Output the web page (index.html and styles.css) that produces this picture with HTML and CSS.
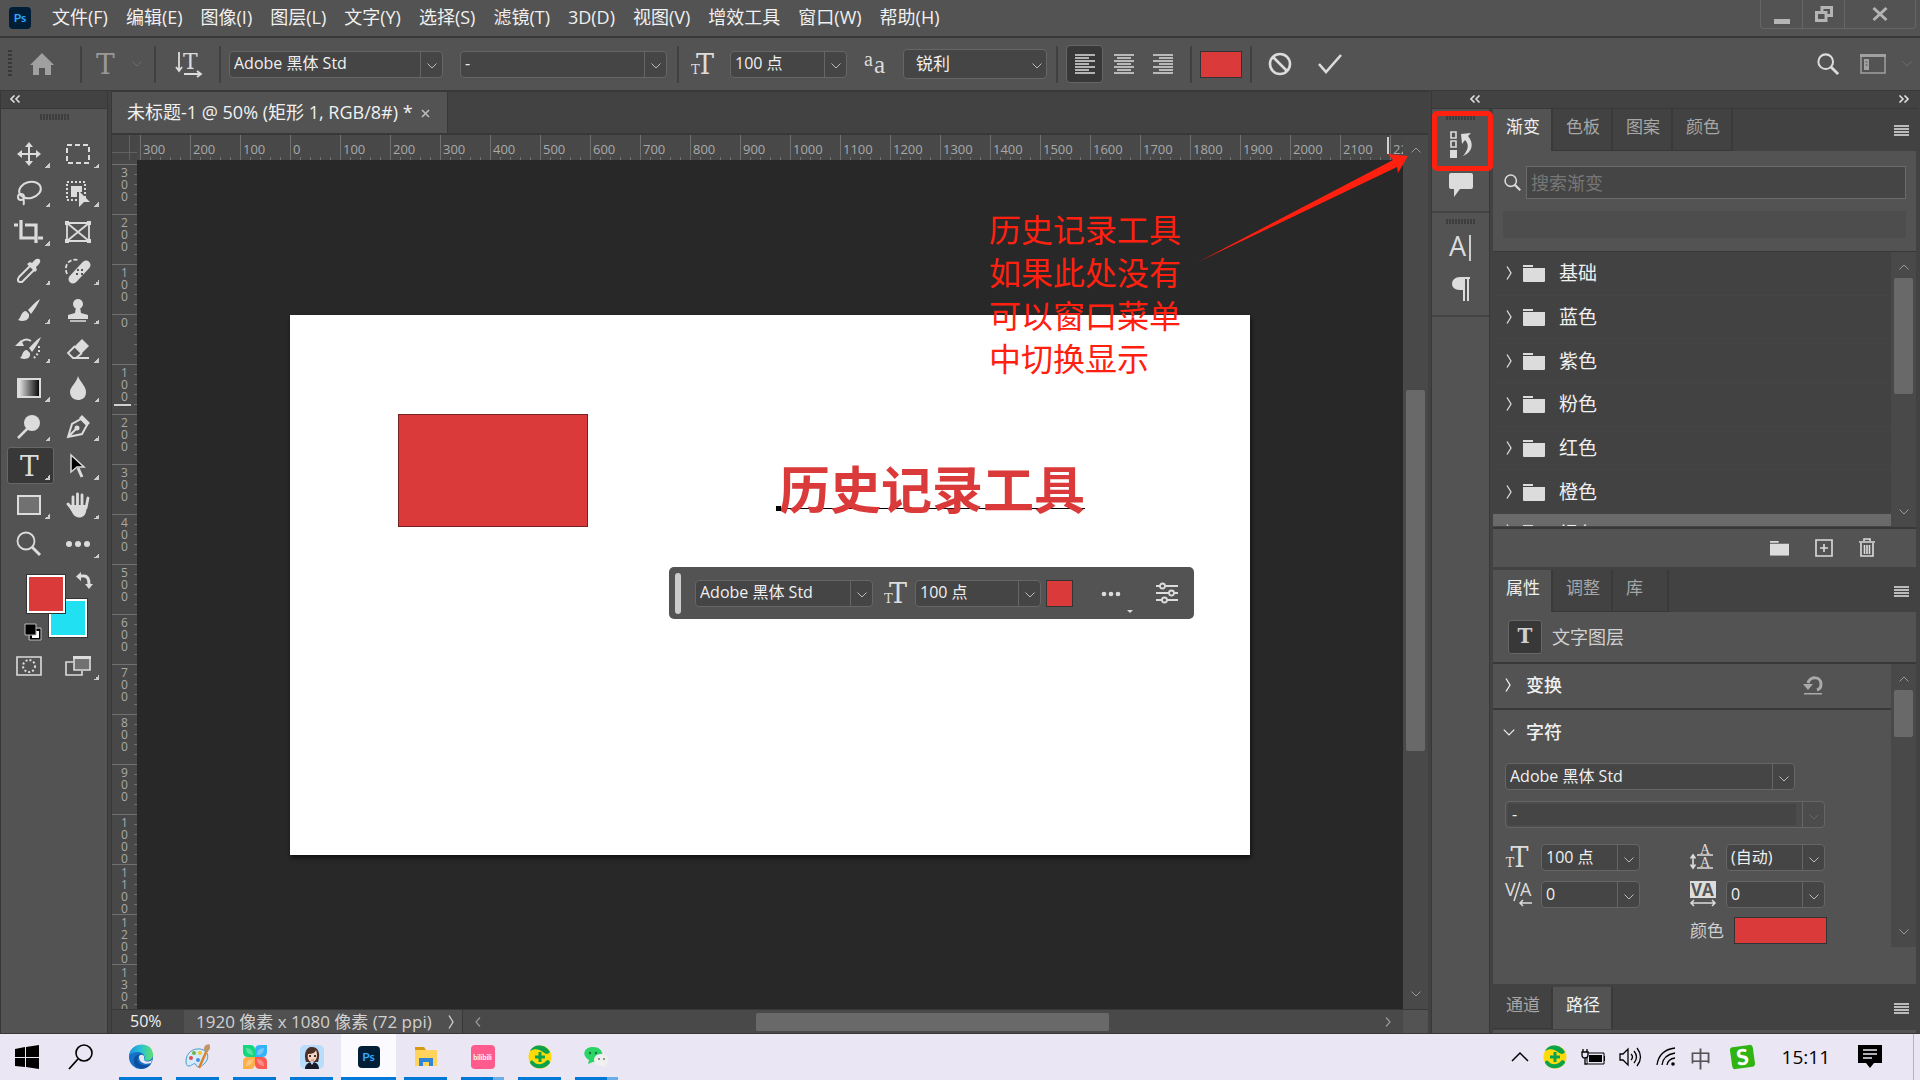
FILE: index.html
```html
<!doctype html>
<html lang="zh-CN">
<head>
    <meta charset="UTF-8">
    <meta name="viewport" content="width=device-width, initial-scale=1.0">
    <title>未标题-1 @ 50% (矩形 1, RGB/8#) *</title>
    <link rel="stylesheet" href="styles.css">
</head>
<body>
<svg class="sprite" aria-hidden="true">
    <symbol id="down" viewBox="0 0 10 6"><path d="M0.5 0.5 5 5 9.5 0.5" fill="none" stroke="currentColor"/></symbol>
    <symbol id="up" viewBox="0 0 10 6"><path d="M0.5 5.5 5 1 9.5 5.5" fill="none" stroke="currentColor"/></symbol>
    <symbol id="right" viewBox="0 0 6 14"><path d="M1 0.5 5 7 1 13.5" fill="none" stroke="currentColor" stroke-width="1.3"/></symbol>
    <symbol id="left" viewBox="0 0 6 10"><path d="M5 0.5 1 5 5 9.5" fill="none" stroke="currentColor" stroke-width="1.2"/></symbol>
    <symbol id="collapse" viewBox="0 0 11 8"><path d="M4.500.5 1 4 4.500 7.500M9.500.5 6 4 9.500 7.500" fill="none" stroke="currentColor" stroke-width="1.600"/></symbol>
    <symbol id="expand" viewBox="0 0 11 8"><path d="M1.500.5 5 4 1.500 7.500M6.500.5 10 4 6.500 7.500" fill="none" stroke="currentColor" stroke-width="1.600"/></symbol>
    <symbol id="menu" viewBox="0 0 15 11"><path d="M0 1h15M0 4h15M0 7h15M0 10h15" stroke="currentColor" stroke-width="2"/></symbol>
    <symbol id="folder" viewBox="0 0 22 18"><path d="M0 1h10v2H0zM0 4h22v13a1 1 0 0 1-1 1H1a1 1 0 0 1-1-1z" fill="currentColor"/></symbol>
    <symbol id="search" viewBox="0 0 24 24"><circle cx="9.500" cy="9.500" r="8" fill="none" stroke="currentColor" stroke-width="2.200"/><path d="m15 15 8 8" stroke="currentColor" stroke-width="3"/></symbol>
    <symbol id="size" viewBox="0 0 25 22"><text x="5" y="21" class="slab" font-size="27">T</text><text x="0" y="21" class="slab" font-size="13">T</text></symbol>
    <symbol id="safe" viewBox="0 0 24 24">
        <circle cx="12" cy="12" r="11.500" fill="#ffda0b"/>
        <path d="M2 6C5-1 17-2 22 7c-2 3-5 2-7 0-4-3-8-4-13-1zM2 18c4 7 15 7 20 0 0-2-1-3-3-3-5 6-11 5-14 1-2-1-3 0-3 2z" fill="#0ba24c"/>
        <path d="M12 7v10M7 12h10" stroke="#0ba24c" stroke-width="3"/>
    </symbol>
</svg>

<div class="app">
    <header class="menubar">
        <span class="ps-logo">Ps</span>
        <nav class="menus">
            <button>文件(F)</button>
            <button>编辑(E)</button>
            <button>图像(I)</button>
            <button>图层(L)</button>
            <button>文字(Y)</button>
            <button>选择(S)</button>
            <button>滤镜(T)</button>
            <button>3D(D)</button>
            <button>视图(V)</button>
            <button>增效工具</button>
            <button>窗口(W)</button>
            <button>帮助(H)</button>
        </nav>
        <div class="window-buttons">
            <button aria-label="最小化"><svg width="16" height="20"><path d="M0 15h16v5H0z" fill="currentColor"/></svg></button>
            <button aria-label="还原"><svg width="18" height="16"><path d="M7 7V1.500h9.500v8H11M1.500 6.500H11v8H1.500z" fill="none" stroke="currentColor" stroke-width="3"/></svg></button>
            <button class="close" aria-label="关闭"><svg width="16" height="14"><path d="m1.500 1 13 12M14.500 1 1.500 13" stroke="currentColor" stroke-width="3"/></svg></button>
        </div>
    </header>

    <section class="options">
        <span class="grip-v"></span>
        <button class="home" aria-label="主页"><svg width="26" height="24"><path d="M13 1 1 13h3v10h6v-7h6v7h6V13h3z" fill="currentColor"/></svg></button>
        <span class="sep"></span>
        <button class="preset" aria-label="工具预设">
            <svg width="22" height="24"><text x="1" y="22" class="slab" font-size="28">T</text></svg>
            <svg class="faint" width="10" height="6"><use href="#down"/></svg>
        </button>
        <span class="sep"></span>
        <button class="orient" aria-label="切换文本取向">
            <svg width="28" height="26"><path d="M4 1v18M1 16l3 4 3-4M9 23h16M22 20l4 3-4 3" fill="none" stroke="currentColor" stroke-width="1.800"/><text x="8" y="18" class="slab" font-size="22">T</text></svg>
        </button>
        <span class="sep"></span>
        <div class="combo family"><input value="Adobe 黑体 Std" aria-label="字体"><button aria-label="展开"><svg width="10" height="6"><use href="#down"/></svg></button></div>
        <div class="combo weight"><input value="-" aria-label="字体样式"><button aria-label="展开"><svg width="10" height="6"><use href="#down"/></svg></button></div>
        <span class="sep"></span>
        <svg class="size-icon" width="25" height="22"><use href="#size"/></svg>
        <div class="combo points"><input value="100 点" aria-label="字号"><button aria-label="展开"><svg width="10" height="6"><use href="#down"/></svg></button></div>
        <svg class="aa-icon" width="22" height="22"><text x="0" y="13" class="serif" font-size="20">a</text><text x="10" y="20" class="serif" font-size="25">a</text></svg>
        <div class="select"><select aria-label="消除锯齿"><option>锐利</option></select><svg width="10" height="6"><use href="#down"/></svg></div>
        <span class="sep"></span>
        <div class="aligns">
            <button class="on" aria-label="左对齐"><svg width="20" height="22"><path d="M0 2h20M0 5h14M0 8h20M0 11h14M0 14h20M0 17h14M0 20h20" stroke="currentColor" stroke-width="1.500"/></svg></button>
            <button aria-label="居中对齐"><svg width="20" height="22"><path d="M0 2h20M3 5h14M0 8h20M3 11h14M0 14h20M3 17h14M0 20h20" stroke="currentColor" stroke-width="1.500"/></svg></button>
            <button aria-label="右对齐"><svg width="20" height="22"><path d="M0 2h20M6 5h14M0 8h20M6 11h14M0 14h20M6 17h14M0 20h20" stroke="currentColor" stroke-width="1.500"/></svg></button>
        </div>
        <span class="sep"></span>
        <button class="swatch" aria-label="文本颜色"></button>
        <span class="sep"></span>
        <button class="cancel" aria-label="取消"><svg width="24" height="24"><circle cx="12" cy="12" r="10" fill="none" stroke="currentColor" stroke-width="2.600"/><path d="m5 5 14 14" stroke="currentColor" stroke-width="2.600"/></svg></button>
        <button class="commit" aria-label="提交"><svg width="24" height="20"><path d="m1 10 7 8L23 1" fill="none" stroke="currentColor" stroke-width="2.600"/></svg></button>
        <div class="options-end">
            <button aria-label="搜索"><svg width="22" height="22"><use href="#search"/></svg></button>
            <button class="dim" aria-label="工作区"><svg width="26" height="20"><path d="M1 1h24v18H1z" fill="none" stroke="currentColor" stroke-width="1.500"/><path d="M0 0h26v3H0zM4 5h5v11H4z" fill="currentColor"/><path d="M5.500 8h2M5.500 11h2" stroke="#535353"/></svg></button>
            <svg class="faint" width="10" height="6"><use href="#down"/></svg>
        </div>
    </section>

    <main class="workspace">
        <aside class="toolbox">
            <div class="dock-head"><svg width="11" height="8"><use href="#collapse"/></svg></div>
            <div class="tools-body">
                <span class="grip"></span>
                <div class="tools">
                    <button aria-label="移动"><svg width="24" height="24"><path d="M12 3v18M3 12h18" stroke="currentColor" stroke-width="2"/><path d="m12 0 4 5H8zM12 24l4-5H8zM0 12l5-4v8zM24 12l-5-4v8z" fill="currentColor"/></svg></button>
                    <button aria-label="矩形选框"><svg width="26" height="22"><path d="M2 2h22v18H2z" fill="none" stroke="currentColor" stroke-width="2" stroke-dasharray="5 3"/></svg></button>
                    <button aria-label="套索"><svg width="28" height="26"><g fill="none" stroke="currentColor" stroke-width="2"><ellipse cx="15" cy="10" rx="11" ry="8" transform="rotate(-15 15 10)"/><circle cx="6" cy="17" r="3"/><path d="M8 19c2 2 0 4 1 6"/></g></svg></button>
                    <button aria-label="对象选择"><svg width="28" height="28"><path d="M3 3h18v18H3z" fill="none" stroke="currentColor" stroke-width="2" stroke-dasharray="2 2"/><path d="M7 7h11v6h-5v5H7zM15 12l11 11h-6l-5 5z" fill="currentColor"/></svg></button>
                    <button aria-label="裁剪"><svg width="30" height="28"><path d="M7 2v18h14M11 7h11v18M0 7h4M24 20h5" fill="none" stroke="currentColor" stroke-width="3.200"/></svg></button>
                    <button class="plain" aria-label="图框"><svg width="26" height="22"><path d="M2 2h22v18H2zM2 2l22 18M24 2 2 20" fill="none" stroke="currentColor" stroke-width="1.800"/><path d="M0 0h4v4H0zM22 0h4v4h-4zM0 18h4v4H0zM22 18h4v4h-4z" fill="currentColor"/></svg></button>
                    <button aria-label="吸管"><svg width="26" height="26"><path d="M14 8 3 19c-2 3-1 5 1 5h2L18 12" fill="none" stroke="currentColor" stroke-width="2"/><path d="m11 6 3-2 2 1c3-4 5-5 7-4s2 4-3 8l1 3-2 2z" fill="currentColor"/></svg></button>
                    <button aria-label="修复画笔"><svg width="28" height="28"><path d="M3 17C-1 8 6 1 14 3" fill="none" stroke="currentColor" stroke-width="1.800" stroke-dasharray="4 2"/><path d="M9 22 22 8" stroke="currentColor" stroke-width="9" stroke-linecap="round"/><path d="M13 13h2M17 13h2M12 17h2M17 17h2" stroke="#535353" stroke-width="2"/></svg></button>
                    <button aria-label="画笔"><svg width="24" height="24"><path d="M23 1c-5 3-9 8-12 11l3 4c3-4 7-10 9-15zM9 13c-5 0-5 7-8 9 5 2 12 1 11-6z" fill="currentColor"/></svg></button>
                    <button aria-label="仿制图章"><svg width="22" height="24"><circle cx="11" cy="6" r="5" fill="currentColor"/><path d="M9 9h4l1 6 7 2v4H1v-4l7-2z" fill="currentColor"/><path d="M3 23h16" stroke="currentColor" stroke-width="1.500"/></svg></button>
                    <button aria-label="历史记录画笔"><svg width="28" height="26"><path d="M26 1c-5 3-9 8-12 11l3 4c3-4 7-10 9-15zM12 14c-5 0-4 6-7 8 5 2 11 1 10-5zM0 10l6-6 3 6z" fill="currentColor"/><path d="M6 6c3-3 7-3 10-1" fill="none" stroke="currentColor" stroke-width="2"/><path d="M24 10v6l-5 6" fill="none" stroke="currentColor" stroke-width="2" stroke-dasharray="2 2"/></svg></button>
                    <button aria-label="橡皮擦"><svg width="24" height="22"><path d="m8 9 8-8 7 7-8 8z" fill="currentColor"/><path d="m9 8-7 7 5 5h3l6-5M7 20h16" fill="none" stroke="currentColor" stroke-width="1.800"/></svg></button>
                    <button aria-label="渐变"><svg width="24" height="20"><defs><linearGradient id="bw"><stop stop-color="#eee"/><stop offset="1" stop-color="#000"/></linearGradient></defs><path d="M1 1h22v18H1z" fill="url(#bw)" stroke="currentColor" stroke-width="2"/></svg></button>
                    <button aria-label="模糊"><svg width="16" height="24"><path d="M8 0c2 6 8 10 8 16s-4 8-8 8-8-3-8-8S7 6 8 0z" fill="currentColor"/></svg></button>
                    <button aria-label="减淡"><svg width="24" height="24"><circle cx="15" cy="8" r="8" fill="currentColor"/><path d="M11 13 1 23" stroke="currentColor" stroke-width="2.500"/></svg></button>
                    <button aria-label="钢笔"><svg width="24" height="24"><path d="M2 22 6 9l9-5 6 6-5 9zM2 22l9-9" fill="none" stroke="currentColor" stroke-width="2"/><circle cx="11" cy="13" r="2.500" fill="currentColor"/><path d="m13 3 3-3 8 8-3 3z" fill="currentColor"/></svg></button>
                    <button class="on" aria-label="横排文字"><svg width="22" height="24"><text x="2" y="22" class="slab" font-size="28">T</text></svg></button>
                    <button aria-label="路径选择"><svg width="18" height="26"><path d="m2 2 13 12H8l-6 5z" fill="#000" stroke="currentColor" stroke-width="1.500"/><path d="m9 15 4 9" stroke="currentColor" stroke-width="3"/></svg></button>
                    <button aria-label="矩形"><svg width="24" height="20"><path d="M1 1h22v18H1z" fill="#717171" stroke="currentColor" stroke-width="2"/></svg></button>
                    <button aria-label="抓手"><svg width="26" height="26"><path d="M8 15V5M12.500 14V2M17 14V3M21 16l2-10M8 18 3 12" stroke="currentColor" stroke-width="2.800" stroke-linecap="round"/><path d="M7 13h15l-1 7c-2 7-10 7-13 2l-5-9z" fill="currentColor"/></svg></button>
                    <button class="plain" aria-label="缩放"><svg width="26" height="26"><circle cx="10" cy="10" r="8.500" fill="none" stroke="currentColor" stroke-width="1.800"/><path d="m16 16 8 8" stroke="currentColor" stroke-width="3"/></svg></button>
                    <button aria-label="编辑工具栏"><svg width="26" height="8"><circle cx="4" cy="4" r="3"/><circle cx="13" cy="4" r="3"/><circle cx="22" cy="4" r="3"/></svg></button>
                </div>
                <div class="colors">
                    <button class="background" aria-label="背景色"></button>
                    <button class="foreground" aria-label="前景色"></button>
                    <button class="swap" aria-label="切换颜色"><svg width="17" height="17"><path d="M4 4h4c4 0 5 3 5 8" fill="none" stroke="currentColor" stroke-width="3"/><path d="M0 4.500 5 0v9zM13 17l-4-5h8z" fill="currentColor"/></svg></button>
                    <button class="default" aria-label="默认颜色"><svg width="18" height="18"><path d="M7 7h9v9H7z" fill="#fff" stroke="#000" stroke-width="2"/><path d="M1 1h11v11H1z" fill="#000" stroke="#bbb"/><path d="M12 5h5v12H5v-5" fill="none" stroke="#bbb"/></svg></button>
                </div>
                <div class="tools">
                    <button class="plain" aria-label="快速蒙版"><svg width="26" height="20"><path d="M1 1h24v18H1z" fill="none" stroke="currentColor" stroke-width="1.600"/><circle cx="13" cy="10" r="6" fill="none" stroke="currentColor" stroke-width="2" stroke-dasharray="2 2"/></svg></button>
                    <button aria-label="屏幕模式"><svg width="26" height="20"><path d="M8 6H1v13h16v-4" fill="none" stroke="currentColor" stroke-width="1.600"/><path d="M9 2h16v12H9z" fill="#717171" stroke="currentColor" stroke-width="1.600"/><path d="M8 0h18v3H8z" fill="currentColor"/></svg></button>
                </div>
            </div>
        </aside>

        <section class="document">
            <div class="doc-tabs">
                <div class="doc-tab"><span>未标题-1 @ 50% (矩形 1, RGB/8#) *</span><button aria-label="关闭文档"><svg width="9" height="9"><path d="m1 1 7 7M8 1 1 8" stroke="currentColor" stroke-width="1.600"/></svg></button></div>
            </div>
            <div class="corner"></div>
            <div class="ruler ruler-h"><i class="mark"></i></div>
            <div class="ruler ruler-v"><i class="mark"></i></div>
            <div class="canvas">
                <div class="artboard">
                    <div class="shape"></div>
                    <div class="headline">历史记录工具</div>
                    <div class="context-bar">
                        <span class="handle"></span>
                        <div class="combo"><input value="Adobe 黑体 Std" aria-label="字体"><button aria-label="展开"><svg width="10" height="6"><use href="#down"/></svg></button></div>
                        <svg class="size-icon" width="25" height="22"><use href="#size"/></svg>
                        <div class="combo points"><input value="100 点" aria-label="字号"><button aria-label="展开"><svg width="10" height="6"><use href="#down"/></svg></button></div>
                        <button class="swatch" aria-label="文本颜色"></button>
                        <button class="more" aria-label="更多"><svg width="34" height="28"><circle cx="3" cy="15" r="2.300"/><circle cx="10" cy="15" r="2.300"/><circle cx="17" cy="15" r="2.300"/><path d="M26 31h6l-3 3z"/></svg></button>
                        <button class="sliders" aria-label="属性"><svg width="22" height="22"><g fill="none" stroke="currentColor" stroke-width="1.800"><path d="M0 4h4M9 4h13M0 11h13M18 11h4M0 18h6M11 18h11"/><circle cx="6.500" cy="4" r="2.500"/><circle cx="15.500" cy="11" r="2.500"/><circle cx="8.500" cy="18" r="2.500"/></g></svg></button>
                    </div>
                </div>
            </div>
            <div class="scroll scroll-y"><svg width="10" height="6"><use href="#up"/></svg><i></i><svg width="10" height="6"><use href="#down"/></svg></div>
            <footer class="status">
                <input class="zoom" value="50%" aria-label="缩放比例">
                <button class="info">1920 像素 x 1080 像素 (72 ppi)<svg width="6" height="14"><use href="#right"/></svg></button>
                <div class="scroll scroll-x"><svg width="6" height="10"><use href="#left"/></svg><i></i><svg class="flip" width="6" height="10"><use href="#left"/></svg></div>
            </footer>
            <div class="note">历史记录工具<br>如果此处没有<br>可以窗口菜单<br>中切换显示</div>
            <svg class="arrow" width="210" height="108"><path d="M0 107 195 5 190-1 210 1 200 18 199 12z" fill="#ff2010"/></svg>
        </section>

        <aside class="dock">
            <div class="dock-head"><svg class="first" width="11" height="8"><use href="#collapse"/></svg><svg width="11" height="8"><use href="#expand"/></svg></div>
            <div class="strip">
                <div class="strip-group">
                    <span class="grip"></span>
                    <button class="history" aria-label="历史记录"><svg width="24" height="28"><path d="M2 2h5v6H2zM2 11h5v6H2z" fill="none" stroke="currentColor" stroke-width="1.600"/><path d="M1 20h7v8H1zM12 4l10-1-3 3c6 7 5 16-5 20 6-7 6-12 2-16l-3 4z" fill="currentColor"/></svg></button>
                    <button aria-label="注释"><svg width="24" height="24"><path d="M2 0h20q2 0 2 2v12q0 2-2 2H11l-6 8v-8H2q-2 0-2-2V2q0-2 2-2z" fill="currentColor"/></svg></button>
                </div>
                <div class="strip-group">
                    <span class="grip"></span>
                    <button aria-label="字符"><svg width="24" height="28"><text x="0" y="22" class="sans" font-size="27">A</text><path d="M21 1v26" stroke="currentColor" stroke-width="1.800"/></svg></button>
                    <button aria-label="段落"><svg width="18" height="24"><path d="M10 0h8v2h-1v22h-2V2h-2v22h-2V13H8C-3 13-2 0 8 0z" fill="currentColor"/></svg></button>
                </div>
                <div class="strip-group rest"></div>
            </div>
            <div class="panels">
                <section class="panel gradients">
                    <div class="tabs">
                        <button class="on">渐变</button><button>色板</button><button>图案</button><button>颜色</button>
                        <svg width="15" height="11"><use href="#menu"/></svg>
                    </div>
                    <label class="find"><svg width="17" height="17"><use href="#search"/></svg><input placeholder="搜索渐变"></label>
                    <div class="recent"></div>
                    <div class="list">
                        <ul>
                            <li><svg width="6" height="14"><use href="#right"/></svg><svg width="22" height="18"><use href="#folder"/></svg>基础</li>
                            <li><svg width="6" height="14"><use href="#right"/></svg><svg width="22" height="18"><use href="#folder"/></svg>蓝色</li>
                            <li><svg width="6" height="14"><use href="#right"/></svg><svg width="22" height="18"><use href="#folder"/></svg>紫色</li>
                            <li><svg width="6" height="14"><use href="#right"/></svg><svg width="22" height="18"><use href="#folder"/></svg>粉色</li>
                            <li><svg width="6" height="14"><use href="#right"/></svg><svg width="22" height="18"><use href="#folder"/></svg>红色</li>
                            <li><svg width="6" height="14"><use href="#right"/></svg><svg width="22" height="18"><use href="#folder"/></svg>橙色</li>
                            <li class="selected"><svg width="6" height="14"><use href="#right"/></svg><svg width="22" height="18"><use href="#folder"/></svg>绿色</li>
                        </ul>
                        <div class="scroll scroll-y"><svg width="10" height="6"><use href="#up"/></svg><i></i><svg width="10" height="6"><use href="#down"/></svg></div>
                    </div>
                    <div class="panel-foot">
                        <button aria-label="新建组"><svg width="19" height="16" viewBox="0 0 22 18"><use href="#folder"/></svg></button>
                        <button aria-label="新建渐变"><svg width="18" height="18"><path d="M1 1h16v16H1zM9 5v8M5 9h8" fill="none" stroke="currentColor" stroke-width="1.600"/></svg></button>
                        <button aria-label="删除"><svg width="16" height="20"><path d="M0 4h16M5 3V1h6v2M2 5v13h12V5M5.500 7v9M8 7v9M10.500 7v9" fill="none" stroke="currentColor" stroke-width="1.600"/></svg></button>
                    </div>
                </section>

                <section class="panel props">
                    <div class="tabs">
                        <button class="on">属性</button><button>调整</button><button>库</button>
                        <svg width="15" height="11"><use href="#menu"/></svg>
                    </div>
                    <div class="layer-kind"><span class="kind-icon">T</span>文字图层</div>
                    <div class="props-scroll">
                        <div class="props-body">
                            <h3 class="transform"><svg width="6" height="14"><use href="#right"/></svg>变换
                                <button aria-label="重置"><svg width="20" height="20"><path d="M5 8c2-7 13-7 13 1 0 3-1 5-4 6" fill="none" stroke="currentColor" stroke-width="3"/><path d="M0 9h10l-5 6zM1 18h18v1.500H1z" fill="currentColor"/></svg></button></h3>
                            <h3><svg width="12" height="7"><use href="#down"/></svg>字符</h3>
                            <div class="fields">
                                <div class="combo family"><input value="Adobe 黑体 Std" aria-label="字体"><button aria-label="展开"><svg width="10" height="6"><use href="#down"/></svg></button></div>
                                <div class="combo style off"><input value="-" aria-label="字体样式"><button aria-label="展开"><svg width="10" height="6"><use href="#down"/></svg></button></div>
                                <div class="pair">
                                    <svg width="26" height="26" viewBox="0 -2 25 26"><use href="#size" width="25" height="22"/></svg>
                                    <div class="combo"><input value="100 点" aria-label="字号"><button aria-label="展开"><svg width="10" height="6"><use href="#down"/></svg></button></div>
                                    <svg width="26" height="26"><path d="M3 12v11M0.500 14.500 3 11l2.500 3.500M0.500 20.500 3 24l2.500-3.500M7 11h16M7 24h16" fill="none" stroke="currentColor" stroke-width="1.600"/><text x="10" y="10" class="serif" font-size="14">A</text><text x="10" y="23" class="serif" font-size="14">A</text></svg>
                                    <div class="combo"><input value="(自动)" aria-label="行距"><button aria-label="展开"><svg width="10" height="6"><use href="#down"/></svg></button></div>
                                    <svg width="28" height="26"><text x="0" y="15" class="sans" font-size="18">V</text><path d="M15 1 9 20M15 22h12M18 19l-3 3 3 3" fill="none" stroke="currentColor" stroke-width="1.500"/><text x="15" y="15" class="sans" font-size="18">A</text></svg>
                                    <div class="combo"><input value="0" aria-label="字距微调"><button aria-label="展开"><svg width="10" height="6"><use href="#down"/></svg></button></div>
                                    <svg width="28" height="26"><path d="M0 0h26v17H0z" fill="currentColor"/><text x="1" y="15" class="sans knock" font-size="17">VA</text><path d="M1 22h24M4 19l-3 3 3 3M22 19l3 3-3 3" fill="none" stroke="currentColor" stroke-width="1.500"/></svg>
                                    <div class="combo"><input value="0" aria-label="字距"><button aria-label="展开"><svg width="10" height="6"><use href="#down"/></svg></button></div>
                                </div>
                                <div class="color-row"><label for="text-color">颜色</label><button id="text-color" class="swatch"></button></div>
                            </div>
                        </div>
                        <div class="scroll scroll-y"><svg width="10" height="6"><use href="#up"/></svg><i></i><svg width="10" height="6"><use href="#down"/></svg></div>
                    </div>
                </section>

                <section class="panel paths">
                    <div class="tabs">
                        <button>通道</button><button class="on">路径</button>
                        <svg width="15" height="11"><use href="#menu"/></svg>
                    </div>
                </section>
            </div>
        </aside>
    </main>

    <footer class="taskbar">
        <button class="start" aria-label="开始"><svg width="24" height="24"><path d="m0 4 10-2v10H0zM11 2l13-2v12H11zM0 13h10v9L0 21zM11 13h13v11l-13-2z"/></svg></button>
        <button class="find-btn" aria-label="搜索"><svg width="26" height="26"><circle cx="16" cy="9" r="8" fill="none" stroke="#000" stroke-width="1.600"/><path d="M10 15 1 25" stroke="#000" stroke-width="1.800"/></svg></button>
        <div class="apps">
            <button aria-label="Edge"><svg width="24" height="24"><defs><linearGradient id="edge"><stop stop-color="#1c8fe0"/><stop offset=".5" stop-color="#2bc3d2"/><stop offset="1" stop-color="#5fe06a"/></linearGradient></defs><circle cx="12" cy="12" r="12" fill="#1570c8"/><path d="M0 11C2-4 24-4 24 10c0 5-6 7-9 5 2-4-1-8-6-8-4 0-8 2-9 4z" fill="url(#edge)"/><path d="M9 12c-2 5 3 11 13 7-6 8-19 5-17-4 0-3 3-6 7-6-1 1-3 2-3 3z" fill="#0c4fa0"/><path d="M10 12c0-3 6-3 5 1-1 3 3 5 8 2l-1 3c-6 2-12 0-12-6z" fill="#eae6f3"/></svg></button>
            <button aria-label="画图"><svg width="26" height="26"><path d="M1 17C1 9 8 4 15 5c9 1 10 10 4 15-3 3-7 4-8 1-1-4-5 2-8 1-1 0-2-2-2-5z" fill="#d5eafa" stroke="#4d9cc9"/><circle cx="6" cy="14" r="2" fill="#e34f4f"/><circle cx="9" cy="9" r="2" fill="#6bb842"/><circle cx="15" cy="9" r="2" fill="#f5c52b"/><circle cx="13" cy="16" r="2" fill="#4a90e2"/><path d="m14 24 8-18" stroke="#d9822b" stroke-width="2.500"/><path d="M19 6c0-4 1-5 5-6 2 3 1 6-2 8z" fill="#c0936b"/></svg></button>
            <button aria-label="应用中心"><svg width="24" height="24"><path d="M0 0h7q5 0 5 5v7H5q-5 0-5-5z" fill="#12d77c"/><path d="M24 0h-7q-5 0-5 5v7h7q5 0 5-5z" fill="#36b2f8"/><path d="M0 24h7q5 0 5-5v-7H5q-5 0-5 5z" fill="#ffae48"/><path d="M24 24h-7q-5 0-5-5v-7h7q5 0 5 5z" fill="#fb5a52"/><path d="M3 3q7 0 7 7-7 0-7-7zM21 3q-7 0-7 7 7 0 7-7zM3 21q7 0 7-7-7 0-7 7zM21 21q-7 0-7-7 7 0 7 7z" fill="#fff" opacity=".3"/></svg></button>
            <button aria-label="助手"><svg width="24" height="24"><rect width="24" height="24" rx="5" fill="#b9dcfa"/><path d="M6 17C3 8 7 1 12 2c6 0 9 6 6 15z" fill="#4b302a"/><path d="M8 9q7 0 8-4c3 8-1 12-4 12s-5-4-4-8z" fill="#f8d5c3"/><path d="M5 24c0-5 4-6 5-7l2 3 2-3c2 1 5 2 5 7z" fill="#171a26"/><circle cx="10" cy="11" r="1"/><circle cx="15" cy="11" r="1"/><path d="M11 15h3" stroke="#d66"/></svg></button>
            <button class="current" aria-label="Photoshop"><span class="ps-logo">Ps</span></button>
            <button aria-label="文件资源管理器"><svg width="24" height="20"><path d="M1 0h9l2 3H1z" fill="#d79a16"/><path d="M1 3h22v16H1z" fill="#ffd35c"/><path d="M5 19v-8h14v8h-4v-4H9v4z" fill="#2f86d6"/></svg></button>
            <button class="multi" aria-label="哔哩哔哩"><span class="bili">bilibili</span></button>
            <button aria-label="安全卫士"><svg width="24" height="24"><use href="#safe"/></svg></button>
            <button class="multi" aria-label="微信"><svg width="26" height="24"><path d="M9 2c12 0 13 14 0 15l-5 2 1-4C-3 10 0 2 9 2z" fill="#2bd565"/><circle cx="6" cy="8" r="1.200" fill="#14703a"/><circle cx="12" cy="8" r="1.200" fill="#14703a"/><path d="M17 9c9 0 9 8 5 10l1 3-4-1C8 22 7 9 17 9z" fill="#f0f0f0"/><circle cx="15" cy="14" r="1" fill="#777"/><circle cx="20" cy="14" r="1" fill="#777"/></svg></button>
        </div>
        <div class="tray">
            <svg width="18" height="10"><path d="m1 9 8-8 8 8" fill="none" stroke="#000" stroke-width="1.500"/></svg>
            <svg width="24" height="24"><use href="#safe"/></svg>
            <svg width="24" height="18"><path d="M6 5h17v11H6z" fill="none" stroke="#000"/><path d="M8 7h13v7H8zM23 8h1v5h-1z"/><path d="M2 1v3M6 1v3M1 4h6v3q0 3-3 3t-3-3zM4 10v6h2" fill="#eae6f3" stroke="#000" stroke-width="1.300"/></svg>
            <svg width="23" height="20"><g fill="none" stroke="#000" stroke-width="1.300"><path d="M1 7v6h3l5 5V2L4 7zM12 7q3 3 0 6M15 4q5 6 0 12M18 1q7 9 0 18"/></g></svg>
            <svg width="20" height="20"><g fill="none" stroke="#000" stroke-width="1.300"><path d="M1 18Q3 3 19 1M6 18Q7 8 19 6M11 18Q12 12 19 11"/></g><circle cx="17" cy="17" r="1.800"/></svg>
            <span class="ime">中</span>
            <span class="sogou">S</span>
            <time>15:11</time>
            <svg class="notice" width="24" height="24"><path d="M0 0h24v18h-8l-4 5-4-5H0z"/><path d="M5 5h14M5 9h14M5 13h9" stroke="#eae6f3" stroke-width="1.300"/></svg>
        </div>
    </footer>
</div>

<script>
  // fill a ruler with one cell per 100 px of the document
  const drawRuler = (selector, from, to) => {
    const ruler = document.querySelector(selector)

    for (let i = from; i <= to; i += 100) {
      const cell = document.createElement("span")
      cell.textContent = Math.abs(i).toString()
      ruler.appendChild(cell)
    }
  }

  drawRuler(".ruler-h", -300, 2200)
  drawRuler(".ruler-v", -300, 1300)
</script>
</body>
</html>
```

FILE: styles.css
```css
:root {
    --panel: #535353;
    --dark: #424242;
    --field: #454545;
    --line: #383838;
    --edge: #666;
    --text: #f0f0f0;
    --icon: #dcdcdc;
    --red: #db3a3a;
    --note: #ff2010;
}

*, *::before, *::after {
    box-sizing: border-box;
}

body {
    margin: 0;
    font: 16px/20px "Open Sans", "Noto Sans CJK SC", sans-serif;
    color: var(--text);
    background: var(--panel);
    overflow: hidden;
}

button, input, select {
    font: inherit;
    color: inherit;
    background: none;
    border: 0;
    padding: 0;
    margin: 0;
    border-radius: 0;
}

svg {
    display: block;
    flex: none;
    fill: currentColor;
    overflow: visible;
}

.sprite {
    display: none;
}

.slab {
    font-family: "DejaVu Serif", serif;
}

.serif {
    font-family: "Liberation Serif", serif;
}

.sans {
    font-family: "Open Sans", sans-serif;
}

.knock {
    fill: var(--panel);
    font-weight: 700;
}

.app {
    height: 100vh;
    display: grid;
    grid-template-rows: 38px 53px 1fr 46px;
}

/* menu bar */

.menubar {
    display: flex;
    border-bottom: 2px solid var(--line);
    padding-left: 9px;
}

.ps-logo {
    display: block;
    width: 22px;
    height: 22px;
    margin-top: 7px;
    border-radius: 4px;
    background: #001e36;
    color: #31a8ff;
    font: 700 12px/21px Lato, sans-serif;
    text-align: center;
}

.menus {
    display: flex;
    gap: 18px;
    margin-left: 21px;
    font-size: 18px;

    button {
        white-space: nowrap;
        padding-bottom: 2px;
    }
}

.window-buttons {
    display: flex;
    height: 29px;
    margin: 0 4px 0 auto;
    border: 1px solid var(--edge);
    border-top: 0;
    border-radius: 0 0 4px 4px;
    color: #b4b4b4;

    button {
        width: 42px;
        display: grid;
        place-items: center;
        border-right: 1px solid var(--edge);
    }

    .close {
        width: 70px;
        border: 0;
    }
}

/* options bar */

.options {
    display: flex;
    align-items: center;
    border-bottom: 1px solid var(--line);
    color: var(--icon);

    > * {
        flex: none;
    }
}

.grip-v {
    width: 4px;
    height: 28px;
    margin-left: 8px;
    background: repeating-linear-gradient(var(--line) 0 2px, transparent 2px 4px);
}

.home {
    margin: 0 25px 0 17px;
    color: #a0a0a0;
}

.sep {
    width: 2px;
    height: 37px;
    background: #404040;
}

.preset {
    display: flex;
    align-items: center;
    gap: 15px;
    margin: 0 12px 0 13px;
    color: #989898;
}

.faint {
    color: #6c6c6c;
}

.orient {
    margin: 0 16px 0 19px;
}

.combo {
    display: flex;
    height: 27px;
    min-width: 0;
    border: 1px solid var(--edge);
    border-radius: 4px;
    background: var(--field);
    color: var(--text);

    input {
        flex: 1;
        width: 0;
        padding: 0 0 2px 4px;
    }

    button {
        width: 22px;
        border-left: 1px solid var(--edge);
        display: grid;
        place-items: center;
        padding-top: 4px;
        color: #bbb;
    }
}

.combo.off {
    background: #4c4c4c;

    input {
        margin: 2px 6px 2px 2px;
        background: var(--field);
    }

    button {
        color: #666;
    }
}

.options .combo.family {
    width: 214px;
    margin: 0 17px 0 8px;
}

.options .combo.weight {
    width: 207px;
    margin-right: 10px;
}

.options .size-icon {
    margin: 0 14px 0 12px;
}

.options .points {
    width: 117px;
}

.aa-icon {
    margin: 0 17px;
}

.select {
    position: relative;
    width: 144px;
    margin-right: 9px;
    color: var(--text);

    select {
        appearance: none;
        width: 100%;
        height: 30px;
        padding: 0 12px;
        border: 1px solid var(--edge);
        border-radius: 4px;
        background: var(--field);
        font-size: 17px;
    }

    svg {
        position: absolute;
        right: 5px;
        top: 14px;
        color: #bbb;
    }
}

.aligns {
    display: flex;
    gap: 2px;
    margin: 0 9px 0 8px;

    button {
        width: 37px;
        height: 38px;
        display: grid;
        place-items: center;
        border: 1px solid transparent;
        border-radius: 4px;
    }

    .on {
        background: #383838;
        border-color: var(--edge);
    }
}

.swatch {
    width: 42px;
    height: 27px;
    margin: 0 8px;
    border: 1px solid #333;
    background: var(--red);
}

.cancel {
    margin: 0 26px 0 16px;
}

.options-end {
    display: flex;
    align-items: center;
    gap: 16px;
    margin: 0 8px 0 auto;
}

.dim {
    margin-left: 5px;
    color: #a0a0a0;
}

/* workspace */

.workspace {
    display: grid;
    grid-template-columns: 108px 1fr 489px;
    gap: 3px;
    min-height: 0;
    background: var(--dark);
    border-bottom: 1px solid var(--line);
}

.dock-head {
    height: 18px;
    padding: 4px 9px 0;
    border-bottom: 1px solid var(--line);
    color: var(--icon);
}

.toolbox {
    border-left: 1px solid var(--line);
    border-right: 1px solid var(--line);
}

.tools-body {
    height: calc(100% - 18px);
    background: var(--panel);
    padding: 5px 0 0 6px;
}

.grip {
    display: block;
    width: 29px;
    height: 6px;
    background: repeating-linear-gradient(90deg, #3e3e3e 0 2px, transparent 2px 3px);
}

.tools-body .grip {
    margin-left: 33px;
}

.tools {
    display: grid;
    grid-template-columns: 47px 47px;
    grid-auto-rows: 37px;
    gap: 2px;
    margin-top: 15px;
    color: var(--icon);

    button {
        position: relative;
        display: grid;
        place-items: center;
        padding-right: 4px;
        border: 1px solid transparent;
        border-radius: 3px;
    }

    button:not(.plain)::after {
        content: "";
        position: absolute;
        right: 3px;
        bottom: 3px;
        width: 5px;
        height: 5px;
        background: linear-gradient(135deg, transparent 50%, #ccc 50%);
    }

    .on {
        background: #383838;
        border-color: #676767;
    }
}

.colors {
    position: relative;
    height: 70px;
    margin-top: 10px;

    button {
        position: absolute;
        color: var(--icon);
    }

    .foreground, .background {
        width: 38px;
        height: 38px;
        border: 2px solid #fff;
        outline: 1px solid #333;
        background: var(--red);
        left: 20px;
        top: 3px;
    }

    .background {
        left: 42px;
        top: 27px;
        background: #21e0f2;
    }

    .swap {
        left: 69px;
        top: 0;
    }

    .default {
        left: 17px;
        top: 51px;
    }
}

.colors + .tools {
    margin-top: 5px;
}

/* document window */

.document {
    position: relative;
    display: grid;
    grid-template: 44px 25px 1fr 24px / 25px 1fr 25px;
    min-width: 0;
    min-height: 0;
    border-left: 1px solid var(--line);
}

.doc-tabs {
    grid-column: 1 / -1;
    display: flex;
    border-top: 1px solid var(--line);
    border-bottom: 2px solid var(--line);
}

.doc-tab {
    display: flex;
    align-items: center;
    gap: 8px;
    padding: 0 17px 2px 15px;
    background: var(--panel);
    border-right: 1px solid var(--line);
    font-size: 18px;
    white-space: nowrap;

    button {
        color: #bbb;
        padding-top: 4px;
    }
}

.corner {
    background:
        linear-gradient(#777, #777) 17px 0 / 1px 100% no-repeat,
        linear-gradient(#777, #777) 0 17px / 100% 1px no-repeat,
        #4a4a4a;
    opacity: .6;
}

.ruler {
    position: relative;
    display: flex;
    overflow: hidden;
    background: #484848;
    color: #a8a8a8;
    font-size: 13px;

    span {
        flex: none;
    }
}

.ruler-h {
    padding-left: 3px;

    span {
        width: 50px;
        padding: 4px 0 0 2px;
        border-left: 1px solid #707070;
        background: repeating-linear-gradient(90deg, transparent 0 9px, #707070 9px 10px) bottom / 100% 3px no-repeat;
    }

    .mark {
        position: absolute;
        right: 14px;
        top: 2px;
        width: 2px;
        height: 17px;
        background: #d0d0d0;
    }
}

.ruler-v {
    flex-direction: column;
    padding-top: 4px;
    font-size: 12px;
    line-height: 12px;

    span {
        height: 50px;
        padding: 2px 8px 0 9px;
        word-break: break-all;
        border-top: 1px solid #707070;
        background: repeating-linear-gradient(transparent 0 9px, #707070 9px 10px) right / 3px 100% no-repeat;
    }

    .mark {
        position: absolute;
        left: 2px;
        top: 244px;
        width: 17px;
        height: 2px;
        background: #d0d0d0;
    }
}

.canvas {
    position: relative;
    overflow: hidden;
    background: #282828;
}

.artboard {
    position: absolute;
    left: 153px;
    top: 155px;
    width: 960px;
    height: 540px;
    background: #fff;
    box-shadow: 1px 3px 4px #111;
}

.shape {
    position: absolute;
    left: 108px;
    top: 99px;
    width: 190px;
    height: 113px;
    background: var(--red);
    border: 1px solid #722;
}

.headline {
    position: absolute;
    left: 489px;
    top: 142px;
    height: 52px;
    color: var(--red);
    font: 700 51px/60px "Noto Sans CJK SC", sans-serif;
    white-space: nowrap;
    border-bottom: 1px solid #000;
}

.headline::before {
    content: "";
    position: absolute;
    left: -3px;
    bottom: -3px;
    width: 5px;
    height: 5px;
    background: #000;
}

.context-bar {
    position: absolute;
    left: 379px;
    top: 252px;
    display: flex;
    align-items: center;
    width: 525px;
    height: 52px;
    padding-left: 6px;
    border-radius: 5px;
    background: var(--panel);
    color: var(--icon);

    .handle {
        width: 6px;
        height: 41px;
        margin-right: 14px;
        border-radius: 3px;
        background: #ccc;
    }

    .combo {
        width: 178px;
    }

    .size-icon {
        margin: 0 6px 0 11px;
    }

    .points {
        width: 126px;
    }

    .swatch {
        width: 27px;
        margin: 0 28px 0 5px;
    }

    .sliders {
        margin-left: 21px;
    }
}

.scroll {
    display: flex;
    align-items: center;
    background: #494949;
    color: #999;

    i {
        background: #696969;
        border-radius: 2px;
    }
}

.scroll-y {
    flex-direction: column;
    justify-content: space-between;
    padding: 12px 0;
    width: 25px;

    i {
        width: 19px;
    }
}

.document > .scroll-y {
    grid-column: 3;
    grid-row: 2 / 4;

    i {
        height: 361px;
        margin-bottom: 4px;
    }
}

.status {
    grid-column: 1 / -1;
    display: flex;
    border-top: 1px solid var(--line);

    .zoom {
        width: 72px;
        padding: 0 0 2px 18px;
        background: var(--field);
    }

    .info {
        display: flex;
        align-items: center;
        gap: 16px;
        padding: 0 8px 0 12px;
        background: #505050;
        border-right: 1px solid var(--line);
        color: #d0d0d0;
        font-size: 17px;
        white-space: nowrap;
    }
}

.scroll-x {
    flex: 1;
    justify-content: space-between;
    padding: 0 12px;
    border-right: 25px solid var(--panel);

    i {
        width: 353px;
        height: 18px;
    }
}

.flip {
    transform: scaleX(-1);
}

.note {
    position: absolute;
    right: 247px;
    top: 116px;
    color: var(--note);
    font: 32px/43px "Noto Sans CJK SC", sans-serif;
}

.arrow {
    position: absolute;
    right: 20px;
    top: 64px;
}

/* right dock */

.dock {
    display: grid;
    grid-template: 18px 1fr / 58px 1fr;
    gap: 0 3px;
    min-height: 0;
    padding-right: 2px;
    border-left: 1px solid var(--line);

    .dock-head {
        grid-column: 1 / -1;
        display: flex;
        justify-content: space-between;
    }

    .first {
        margin-left: 29px;
    }
}

.strip {
    display: flex;
    flex-direction: column;
    gap: 2px;
    border-right: 1px solid var(--line);
    color: var(--icon);
}

.strip-group {
    display: flex;
    flex-direction: column;
    align-items: center;
    height: 102px;
    padding-top: 6px;
    gap: 7px;
    background: var(--panel);

    .grip {
        width: 29px;
        height: 5px;
    }

    button {
        position: relative;
        height: 34px;
        display: grid;
        place-items: center;
    }

    .history::before {
        content: "";
        position: absolute;
        left: -17px;
        top: -16px;
        width: 61px;
        height: 60px;
        border: 5px solid var(--note);
        border-radius: 5px;
    }
}

.strip-group.rest {
    flex: 1;
}

.panels {
    display: grid;
    grid-template-rows: 458px 1fr 46px;
    gap: 3px;
    min-height: 0;
    padding-right: 2px;
}

.panel {
    display: flex;
    flex-direction: column;
    min-height: 0;
    background: var(--panel);
}

.tabs {
    display: flex;
    flex: none;
    height: 42px;
    background: var(--dark);
    color: #a6a6a6;
    font-size: 17px;

    button {
        min-width: 56px;
        padding: 0 11px 6px 13px;
        text-align: left;
        border-right: 2px solid #3a3a3a;
        border-bottom: 1px solid var(--line);
    }

    .on {
        background: var(--panel);
        color: var(--text);
        border-bottom: 0;
    }

    svg {
        margin: 16px 7px 0 auto;
        color: #bbb;
    }
}

.find {
    display: flex;
    align-items: center;
    gap: 5px;
    padding: 15px 10px 12px 11px;
    color: var(--icon);

    input {
        flex: 1;
        width: 0;
        height: 33px;
        padding: 0 4px;
        border: 1px solid #6a6a6a;
        background: var(--field);
        font-size: 18px;
    }

    input::placeholder {
        color: #777;
    }
}

.recent {
    height: 27px;
    margin: 0 10px 13px 10px;
    background: #4d4d4d;
}

.list {
    display: flex;
    height: 278px;
    border-top: 1px solid var(--line);
    border-bottom: 2px solid var(--line);

    ul {
        flex: 1;
        display: grid;
        grid-template-rows: repeat(6, 1fr) 13px;
        margin: 0;
        padding: 0;
        list-style: none;
        font-size: 19px;
        background: var(--dark);
    }

    li {
        display: flex;
        align-items: center;
        padding-left: 13px;
        border-bottom: 1px solid #454545;
    }

    li svg {
        margin-right: 11px;
        color: var(--icon);
    }

    li svg + svg {
        margin-right: 14px;
    }

    .selected {
        align-items: flex-start;
        padding-top: 10px;
        overflow: hidden;
        background: #6a6a6a;
    }

    .scroll i {
        height: 116px;
        margin-bottom: 108px;
    }
}

.panel-foot {
    flex: 1;
    display: flex;
    justify-content: flex-end;
    align-items: center;
    gap: 26px;
    padding-right: 41px;
    color: var(--icon);
}

.layer-kind {
    display: flex;
    align-items: center;
    gap: 10px;
    height: 52px;
    padding-left: 15px;
    border-bottom: 2px solid var(--line);
    color: #d0d0d0;
    font-size: 18px;
}

.kind-icon {
    width: 34px;
    height: 34px;
    border: 1px solid var(--edge);
    border-radius: 3px;
    background: #383838;
    font: 700 20px/31px "DejaVu Serif", serif;
    text-align: center;
}

.props-scroll {
    display: flex;
    align-items: flex-start;

    .scroll {
        height: 283px;
    }

    .scroll i {
        height: 47px;
        margin-bottom: 184px;
    }
}

.props-body {
    flex: 1;
    min-width: 0;

    h3 {
        display: flex;
        align-items: center;
        gap: 11px;
        height: 44px;
        margin: 0;
        padding-left: 10px;
        font-size: 18px;
        font-weight: 500;
    }

    .transform {
        gap: 15px;
        height: 46px;
        padding: 0 68px 2px 12px;
        border-bottom: 2px solid var(--line);

        button {
            margin-left: auto;
            color: #aaa;
        }
    }
}

.fields {
    padding: 9px 0 0 12px;
    color: var(--icon);

    .family {
        width: 290px;
        margin-bottom: 11px;
    }

    .style {
        width: 320px;
        margin-bottom: 16px;
    }
}

.pair {
    display: grid;
    grid-template-columns: 36px 99px 86px 99px;
    gap: 10px 0;
    width: 320px;

    > svg:nth-child(4n+3) {
        margin-left: 50px;
    }
}

.color-row {
    display: flex;
    justify-content: flex-end;
    align-items: center;
    width: 322px;
    margin-top: 9px;
    font-size: 17px;
    color: #d0d0d0;

    .swatch {
        width: 93px;
        margin: 0 0 0 10px;
    }
}

.paths {
    background: var(--dark);
    border-bottom: 3px solid var(--panel);
}

/* windows taskbar */

.taskbar {
    display: flex;
    align-items: center;
    background: #eae6f3;
    color: #000;
}

.start {
    margin-left: 15px;
}

.find-btn {
    margin: 0 18px 0 29px;
}

.apps {
    display: flex;
    height: 100%;

    button {
        display: grid;
        place-items: center;
        width: 43px;
        margin: 0 7px;
        border-bottom: 3px solid #0078d7;
        padding-top: 3px;
    }

    .current {
        width: 55px;
        margin: 0 1px;
        background: #fbfaff;
    }

    .multi {
        border-image: linear-gradient(90deg, #0078d7 72%, #69aee6 72%) 3;
    }

    .ps-logo {
        margin: 0;
    }
}

.bili {
    width: 24px;
    height: 24px;
    border-radius: 4px;
    background: #ff5c8d;
    color: #fff;
    font: 700 7px/24px Lato, sans-serif;
    text-align: center;
}

.tray {
    display: flex;
    align-items: center;
    gap: 14px;
    height: 100%;
    margin-left: auto;
    margin-right: 6px;
    padding-right: 31px;
    border-right: 1px solid #b5b1bd;
}

.ime {
    margin-right: 5px;
    font: 22px/24px "Noto Sans CJK SC", sans-serif;
    color: #555;
}

.sogou {
    width: 23px;
    height: 22px;
    border-radius: 3px;
    background: #2fb413;
    color: #fff;
    font: 900 22px/22px Lato, sans-serif;
    text-align: center;
    transform: rotate(-8deg);
}

time {
    margin: 0 14px;
    font-size: 19px;
}
```
